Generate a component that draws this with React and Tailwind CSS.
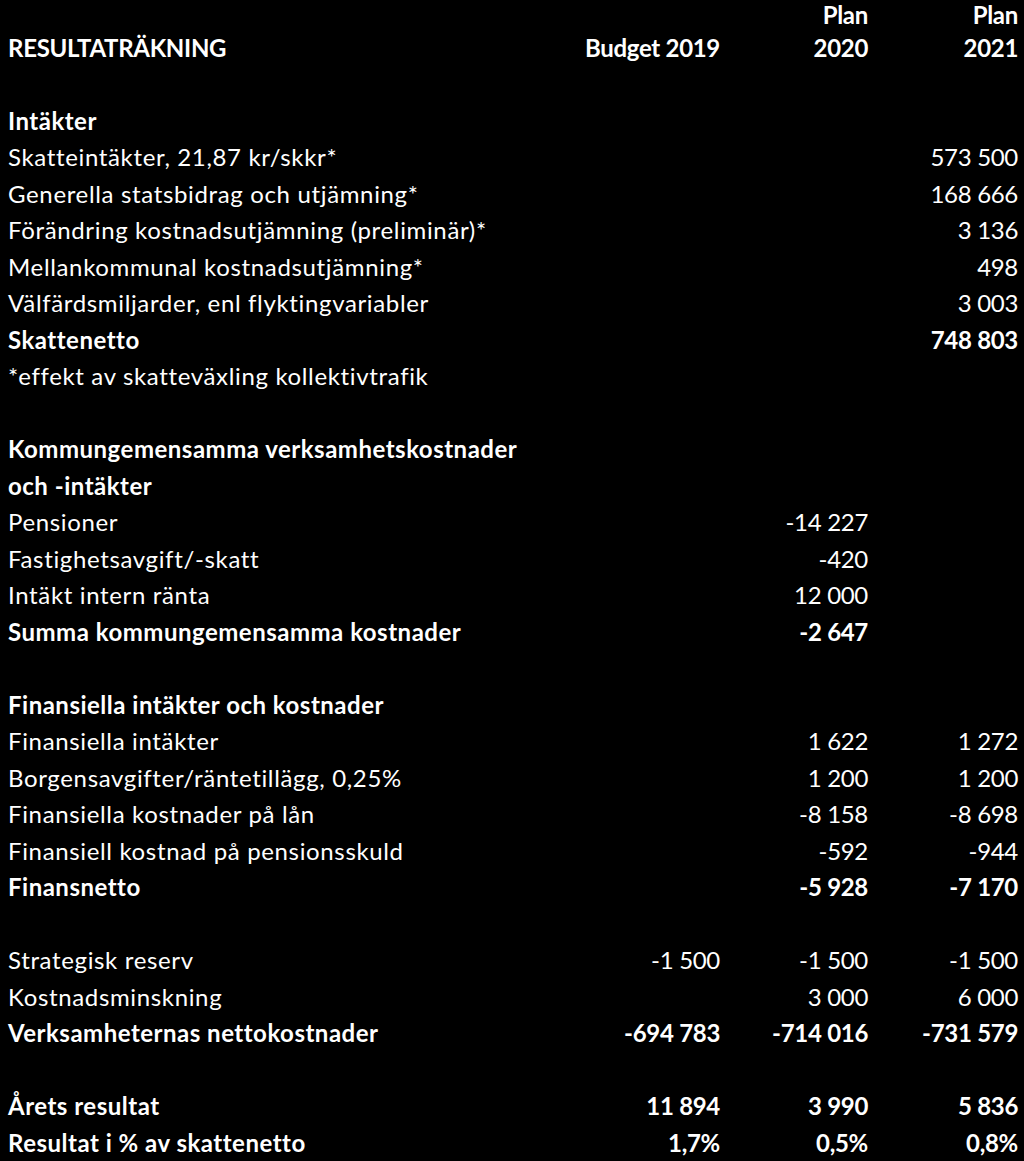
import React from 'react';

const rows = [
	{ label: '', b: '', p20: 'Plan', p21: 'Plan', bold: true, h: 'h-[29.5px]' },
	{ label: 'RESULTATRÄKNING', b: 'Budget 2019', p20: '2020', p21: '2021', bold: true, tight: true },
	{},
	{ label: 'Intäkter', bold: true },
	{ label: 'Skatteintäkter, 21,87 kr/skkr*', p21: '573 500' },
	{ label: 'Generella statsbidrag och utjämning*', p21: '168 666' },
	{ label: 'Förändring kostnadsutjämning (preliminär)*', p21: '3 136' },
	{ label: 'Mellankommunal kostnadsutjämning*', p21: '498' },
	{ label: 'Välfärdsmiljarder, enl flyktingvariabler', p21: '3 003' },
	{ label: 'Skattenetto', p21: '748 803', bold: true },
	{ label: '*effekt av skatteväxling kollektivtrafik' },
	{},
	{ label: 'Kommungemensamma verksamhetskostnader', bold: true },
	{ label: 'och -intäkter', bold: true },
	{ label: 'Pensioner', p20: '-14 227' },
	{ label: 'Fastighetsavgift/-skatt', p20: '-420' },
	{ label: 'Intäkt intern ränta', p20: '12 000' },
	{ label: 'Summa kommungemensamma kostnader', p20: '-2 647', bold: true },
	{},
	{ label: 'Finansiella intäkter och kostnader', bold: true },
	{ label: 'Finansiella intäkter', p20: '1 622', p21: '1 272' },
	{ label: 'Borgensavgifter/räntetillägg, 0,25%', p20: '1 200', p21: '1 200' },
	{ label: 'Finansiella kostnader på lån', p20: '-8 158', p21: '-8 698' },
	{ label: 'Finansiell kostnad på pensionsskuld', p20: '-592', p21: '-944' },
	{ label: 'Finansnetto', p20: '-5 928', p21: '-7 170', bold: true },
	{},
	{ label: 'Strategisk reserv', b: '-1 500', p20: '-1 500', p21: '-1 500' },
	{ label: 'Kostnadsminskning', p20: '3 000', p21: '6 000' },
	{ label: 'Verksamheternas nettokostnader', b: '-694 783', p20: '-714 016', p21: '-731 579', bold: true },
	{},
	{ label: 'Årets resultat', b: '11 894', p20: '3 990', p21: '5 836', bold: true },
	{ label: 'Resultat i % av skattenetto', b: '1,7%', p20: '0,5%', p21: '0,8%', bold: true },
];

export default function App() {
	return (
		<div className="w-[1024px] h-[1161px] overflow-hidden bg-black text-white" style={{ fontFamily: 'Lato, "Noto Sans", sans-serif' }}>
			<div className="flex flex-col text-[24px] leading-none">
				{rows.map((r, i) => (
					<div key={i} className={`flex items-center ${r.h || 'h-[36.5px]'} ${r.bold ? 'font-bold' : ''}`}>
						<div className={`flex-1 pl-[8px] whitespace-nowrap ${r.tight ? 'tracking-[-0.3px]' : r.bold ? 'tracking-[0.5px]' : 'tracking-[0.65px]'}`}>{r.label}</div>
						<div className="w-[200px] text-right tracking-[-0.3px]">{r.b}</div>
						<div className="w-[148px] text-right tracking-[-0.3px]">{r.p20}</div>
						<div className="w-[156px] pr-[6px] text-right tracking-[-0.3px]">{r.p21}</div>
					</div>
				))}
			</div>
		</div>
	);
}
